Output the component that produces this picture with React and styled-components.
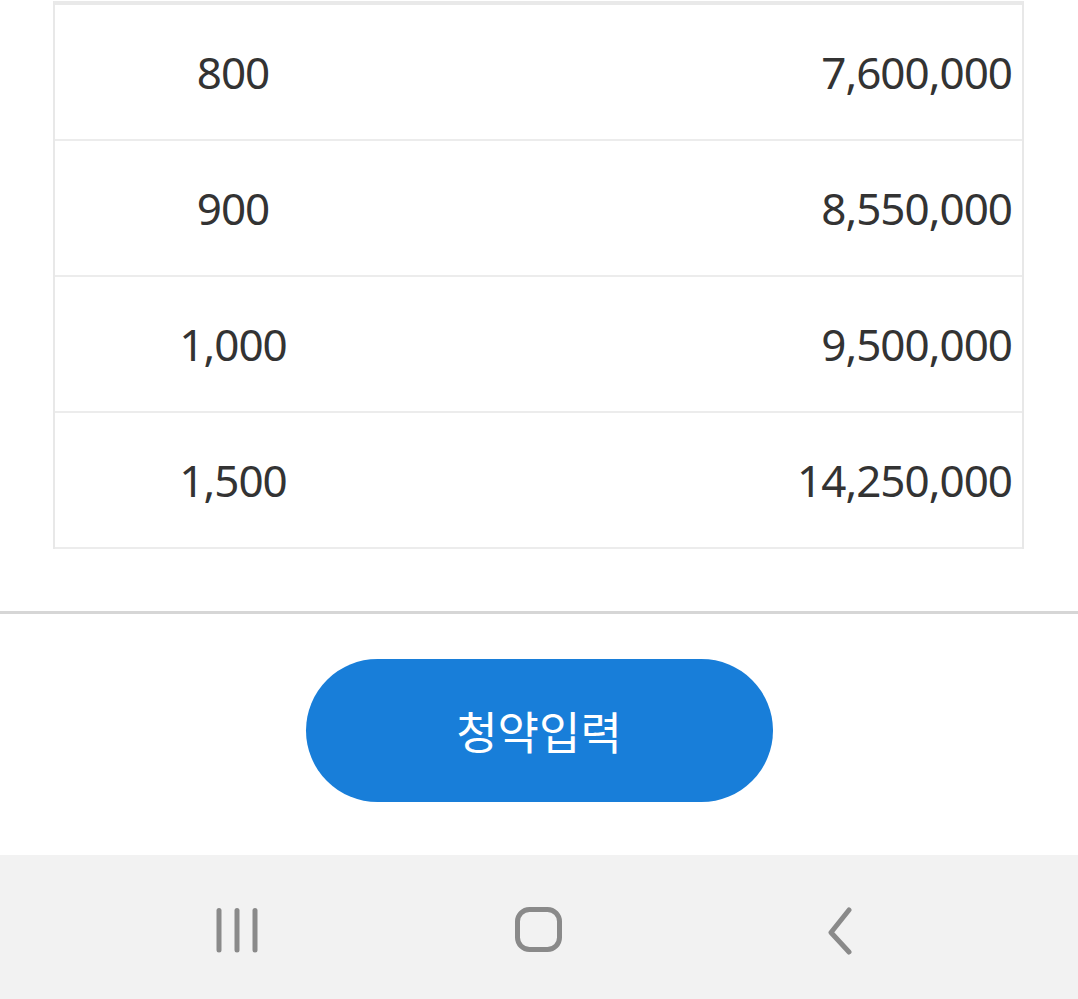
import React from 'react';
import styled, { createGlobalStyle } from 'styled-components';

const rows = [
  { qty: '800', amount: '7,600,000' },
  { qty: '900', amount: '8,550,000' },
  { qty: '1,000', amount: '9,500,000' },
  { qty: '1,500', amount: '14,250,000' },
];

const GlobalStyle = createGlobalStyle`
  html, body {
    margin: 0;
    padding: 0;
    background: #ffffff;
  }
  body {
    font-family: "Noto Sans", "Noto Sans CJK KR", sans-serif;
  }
`;

const Page = styled.div`
  width: 1078px;
  height: 999px;
  display: flex;
  flex-direction: column;
  overflow: hidden;
`;

const Table = styled.div`
  margin: 1px 54px 0 53px;
  border-top: 4px solid #e9e9e9;
  border-left: 2px solid #e8e8e8;
  border-right: 2px solid #e8e8e8;
`;

const Row = styled.div`
  display: grid;
  grid-template-columns: 356px 1fr;
  align-items: center;
  height: 134px;
  border-bottom: 2px solid #ececec;
`;

const Cell = styled.div`
  font-family: "Noto Sans", sans-serif;
  font-size: 44px;
  letter-spacing: -1px;
  color: #333333;
  text-align: ${({ $align }) => $align};
  padding-right: ${({ $align }) => ($align === 'right' ? '10px' : '0')};
`;

const Divider = styled.div`
  margin-top: 62px;
  height: 3px;
  background: #d6d6d6;
`;

const ButtonArea = styled.div`
  display: flex;
  justify-content: center;
  padding: 45px 0 53px;
`;

const SubmitButton = styled.button`
  width: 467px;
  height: 143px;
  border: none;
  border-radius: 72px;
  background: #187ed9;
  color: #ffffff;
  font-family: "Noto Sans CJK KR", sans-serif;
  font-size: 45px;
  font-weight: 400;
  padding: 0;
`;

const NavBar = styled.div`
  flex: 1;
  background: #f2f2f2;
  display: grid;
  grid-template-columns: repeat(3, 302px);
  justify-content: center;
  align-items: center;
`;

const NavSlot = styled.div`
  display: flex;
  justify-content: center;
  align-items: center;
  padding-top: 6px;
`;

const ICON = '#8a8a8a';

const RecentIcon = () => (
  <svg width="46" height="50" viewBox="0 0 46 50">
    <g stroke={ICON} strokeWidth="5" strokeLinecap="round">
      <line x1="5" y1="5.5" x2="5" y2="45" />
      <line x1="23" y1="5.5" x2="23" y2="45" />
      <line x1="41" y1="5.5" x2="41" y2="45" />
    </g>
  </svg>
);

const HomeIcon = () => (
  <svg width="48" height="46" viewBox="0 0 48 46">
    <rect x="2.5" y="2.5" width="42" height="40" rx="12" fill="none" stroke={ICON} strokeWidth="5" />
  </svg>
);

const BackIcon = () => (
  <svg width="34" height="50" viewBox="0 0 34 50">
    <polyline
      points="25,5 7,27.5 25,47"
      fill="none"
      stroke={ICON}
      strokeWidth="5"
      strokeLinecap="round"
      strokeLinejoin="round"
    />
  </svg>
);

export default function App() {
  return (
    <Page>
      <GlobalStyle />
      <Table>
        {rows.map((r) => (
          <Row key={r.qty}>
            <Cell $align="center">{r.qty}</Cell>
            <Cell $align="right">{r.amount}</Cell>
          </Row>
        ))}
      </Table>
      <Divider />
      <ButtonArea>
        <SubmitButton>청약입력</SubmitButton>
      </ButtonArea>
      <NavBar>
        <NavSlot><RecentIcon /></NavSlot>
        <NavSlot><HomeIcon /></NavSlot>
        <NavSlot><BackIcon /></NavSlot>
      </NavBar>
    </Page>
  );
}
